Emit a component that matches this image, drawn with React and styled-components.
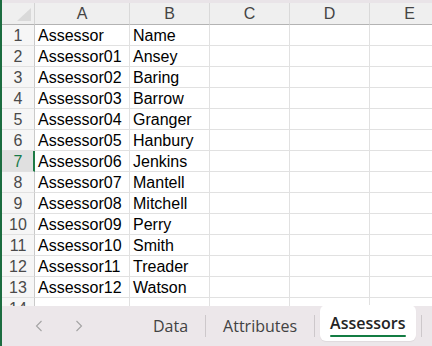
import React from "react";
import styled, { createGlobalStyle, css } from "styled-components";

const Global = createGlobalStyle`
  *, *::before, *::after { box-sizing: border-box; }
  html, body { margin: 0; padding: 0; background: #fff; overflow: hidden; }
  body { font-family: "Liberation Sans", Arial, sans-serif; }
`;

const Window = styled.div`
  width: 432px;
  height: 346px;
  display: flex;
  flex-direction: column;
  border-left: 2px solid #1c6d40;
  overflow: hidden;
  background: #fff;
`;

const TopStrip = styled.div`
  height: 3px;
  flex: none;
  background: #e9e4e8;
`;

const Sheet = styled.div`
  flex: 1;
  min-height: 0;
  overflow: hidden;
  display: grid;
  grid-template-columns: 33px 95px 80px 80px 80px 80px;
  grid-template-rows: 22px;
  grid-auto-rows: 21px;
  font-size: 16px;
`;

const Corner = styled.div`
  position: relative;
  background: #efefef;
  border-right: 1px solid #d4d4d4;
  border-bottom: 1px solid #b3b3b3;
  &::after {
    content: "";
    position: absolute;
    right: 3px;
    bottom: 3px;
    width: 14px;
    height: 13px;
    background: #d9d9d9;
    clip-path: polygon(100% 0, 100% 100%, 0 100%);
  }
`;

const ColHead = styled.div`
  background: #efefef;
  border-right: 1px solid #d9d9d9;
  border-bottom: 1px solid #b3b3b3;
  color: #444;
  display: flex;
  align-items: center;
  justify-content: center;
  padding-top: 1px;
`;

const RowHead = styled.div`
  background: ${(p) => (p.$active ? "#e0e0e0" : "#f6f6f6")};
  border-right: ${(p) => (p.$active ? "2px solid #1d7a45" : "1px solid #cacaca")};
  border-bottom: 1px solid #e1e1e1;
  color: ${(p) => (p.$active ? "#187a4a" : "#4a4a4a")};
  text-align: center;
  line-height: 19px;
  padding-top: 1px;
  ${(p) => p.$active && css`padding-left: 1px;`}
`;

const Cell = styled.div`
  border-right: 1px solid #e1e1e1;
  border-bottom: 1px solid #e1e1e1;
  color: #000;
  padding: 1px 0 0 3px;
  line-height: 19px;
  white-space: nowrap;
  overflow: hidden;
`;

const TabBar = styled.div`
  height: 40px;
  flex: none;
  display: flex;
  align-items: center;
  background: #ece7ea;
  font-family: "Open Sans", "Noto Sans", sans-serif;
  font-size: 16px;
`;

const Nav = styled.div`
  width: 134px;
  height: 100%;
  display: flex;
  align-items: center;
  padding-left: 31px;
  gap: 29px;
`;

const NavButton = styled.span`
  width: 11px;
  height: 12px;
  display: flex;
  align-items: center;
  justify-content: center;
  color: #a3a3a3;
`;

const Tab = styled.div`
  padding: 0 17px;
  color: #424242;
  line-height: 40px;
  white-space: nowrap;
`;

const Sep = styled.div`
  width: 1px;
  height: 22px;
  background: #cdc8cb;
  flex: none;
`;

const ActiveTab = styled.div`
  position: relative;
  align-self: flex-start;
  margin: -1px 5px 0;
  height: 36px;
  padding: 0 10px;
  background: #fff;
  border-radius: 6px;
  color: #242424;
  font-weight: 600;
  line-height: 36px;
  white-space: nowrap;
  box-shadow: 0 1px 1px rgba(0,0,0,0.06);
  &::after {
    content: "";
    position: absolute;
    left: 10px;
    right: 10px;
    bottom: 4px;
    height: 2px;
    border-radius: 1px;
    background: #137c43;
  }
`;

const Chevron = ({ dir }) => (
  <svg width="8" height="12" viewBox="0 0 8 12" fill="none" stroke="currentColor" strokeWidth="1.1">
    {dir === "left" ? <path d="M6.5 1 L1.5 6 L6.5 11" /> : <path d="M1.5 1 L6.5 6 L1.5 11" />}
  </svg>
);

const rows = [
  ["Assessor", "Name"],
  ["Assessor01", "Ansey"],
  ["Assessor02", "Baring"],
  ["Assessor03", "Barrow"],
  ["Assessor04", "Granger"],
  ["Assessor05", "Hanbury"],
  ["Assessor06", "Jenkins"],
  ["Assessor07", "Mantell"],
  ["Assessor08", "Mitchell"],
  ["Assessor09", "Perry"],
  ["Assessor10", "Smith"],
  ["Assessor11", "Treader"],
  ["Assessor12", "Watson"],
  ["", ""],
];

const cols = ["A", "B", "C", "D", "E"];

export default function App() {
  return (
    <>
      <Global />
      <Window>
        <TopStrip />
        <Sheet>
          <Corner />
          {cols.map((c) => (
            <ColHead key={c}>{c}</ColHead>
          ))}
          {rows.map((r, i) => (
            <React.Fragment key={i}>
              <RowHead $active={i === 6}>{i + 1}</RowHead>
              <Cell>{r[0]}</Cell>
              <Cell>{r[1]}</Cell>
              <Cell />
              <Cell />
              <Cell />
            </React.Fragment>
          ))}
        </Sheet>
        <TabBar>
          <Nav>
            <NavButton><Chevron dir="left" /></NavButton>
            <NavButton><Chevron dir="right" /></NavButton>
          </Nav>
          <Tab>Data</Tab>
          <Sep />
          <Tab>Attributes</Tab>
          <Sep />
          <ActiveTab>Assessors</ActiveTab>
          <Sep />
        </TabBar>
      </Window>
    </>
  );
}
